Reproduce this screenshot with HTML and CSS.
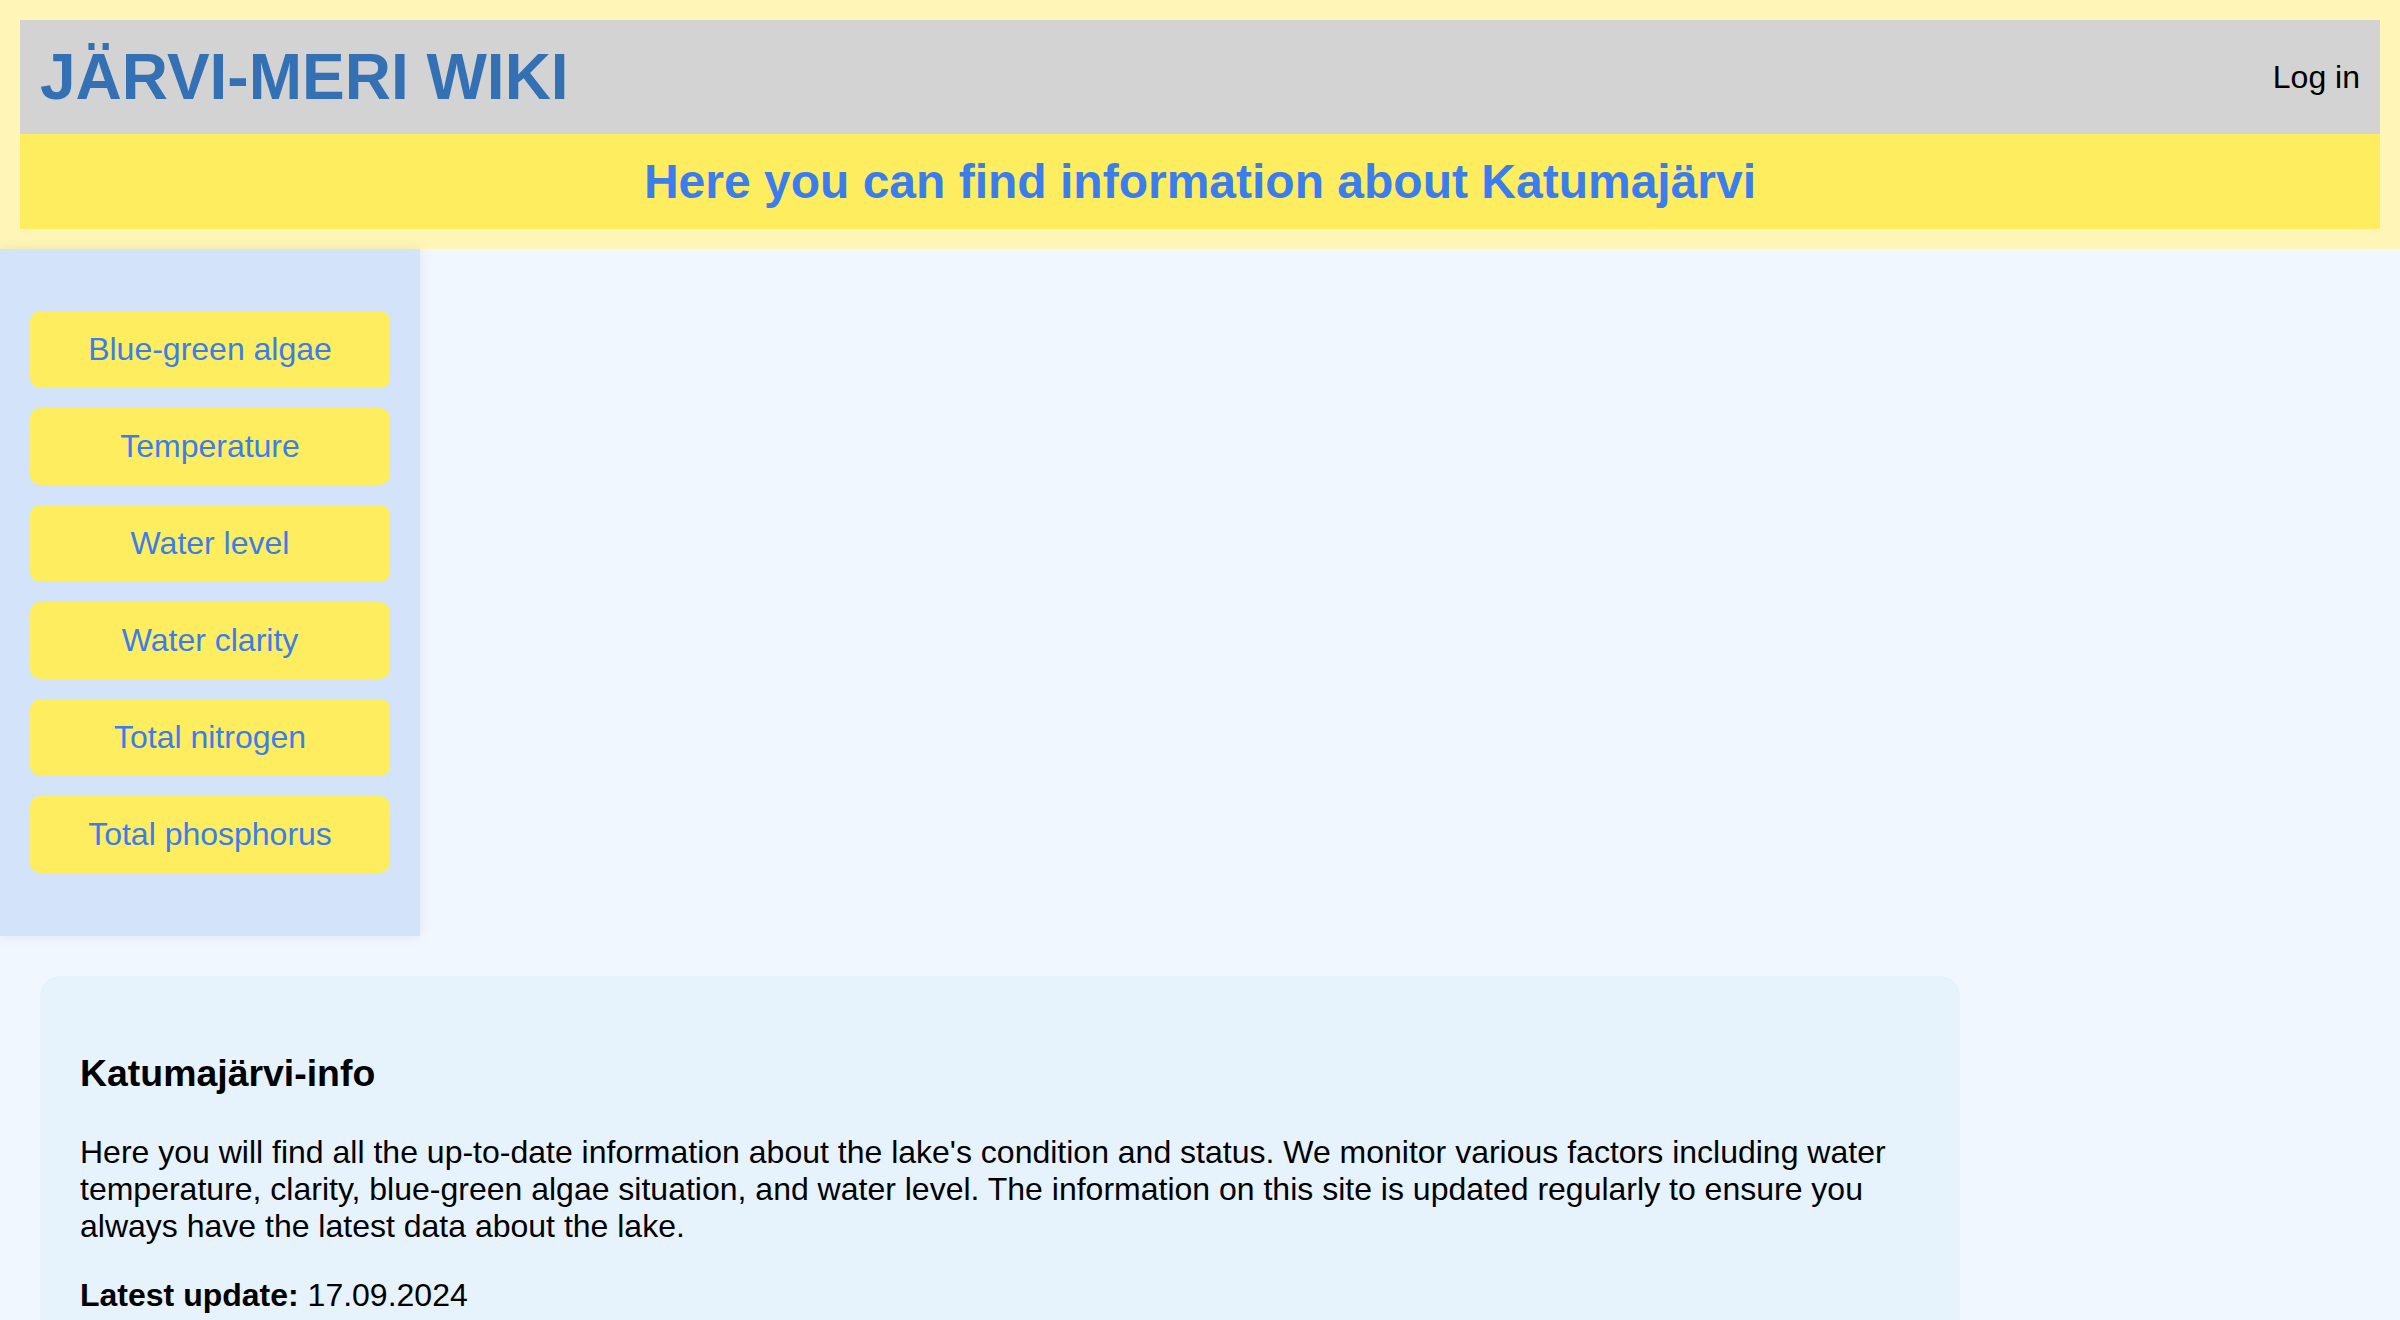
FILE: index.html
```html
<!DOCTYPE html>
<html lang="en">
<head>
<meta charset="utf-8">
<title>Järvi-Meri Wiki</title>
<link rel="stylesheet" href="styles.css">
</head>
<body>
<header class="site-header">
  <div class="topbar">
    <h1 class="logo">JÄRVI-MERI WIKI</h1>
    <a class="login" href="#">Log in</a>
  </div>
  <div class="banner">
    <h2 class="banner-title">Here you can find information about Katumajärvi</h2>
  </div>
</header>
<aside class="sidebar">
  <nav class="nav">
    <a class="nav-btn" href="#">Blue-green algae</a>
    <a class="nav-btn" href="#">Temperature</a>
    <a class="nav-btn" href="#">Water level</a>
    <a class="nav-btn" href="#">Water clarity</a>
    <a class="nav-btn" href="#">Total nitrogen</a>
    <a class="nav-btn" href="#">Total phosphorus</a>
  </nav>
</aside>
<main class="content">
  <section class="info-card">
    <h3 class="info-title">Katumajärvi-info</h3>
    <p class="info-text">Here you will find all the up-to-date information about the lake's condition and status. We monitor various factors including water temperature, clarity, blue-green algae situation, and water level. The information on this site is updated regularly to ensure you always have the latest data about the lake.</p>
    <p class="info-text"><strong>Latest update:</strong> 17.09.2024</p>
  </section>
</main>
</body>
</html>
```
FILE: styles.css
```css
html, body {
  margin: 0;
  padding: 0;
}
body {
  background: #f0f7ff;
  font-family: "Liberation Sans", Arial, Helvetica, sans-serif;
  font-size: 32px;
  color: #000;
}
.site-header {
  background: #fff5b6;
  padding: 20px;
}
.topbar {
  background: #d3d3d3;
  display: flex;
  justify-content: space-between;
  align-items: center;
  padding: 20px;
}
.logo {
  margin: 0;
  font-size: 64px;
  font-weight: bold;
  color: #3371b4;
  line-height: normal;
}
.login {
  color: #000;
  text-decoration: none;
  font-size: 32px;
}
.banner {
  background: #fded5f;
  padding: 20px;
  text-align: center;
}
.banner-title {
  margin: 0;
  font-size: 48px;
  font-weight: bold;
  color: #3b7ded;
  line-height: normal;
}
.sidebar {
  width: 420px;
  box-sizing: border-box;
  background: #d2e3fa;
  padding: 62px 30px 63px;
  box-shadow: 0 0 12px rgba(0, 0, 0, 0.08);
}
.nav {
  display: flex;
  flex-direction: column;
  gap: 20px;
}
.nav-btn {
  display: block;
  background: #fded5f;
  color: #3b7ded;
  text-decoration: none;
  text-align: center;
  padding: 20px;
  border-radius: 10px;
  font-size: 32px;
}
.content {
  padding: 40px;
}
.info-card {
  width: 1920px;
  box-sizing: border-box;
  background: #e6f2fc;
  border-radius: 20px;
  padding: 40px;
}
.info-title {
  font-size: 37.44px;
  margin: 36px 0 39px;
}
.info-text {
  margin: 32px 0;
}
```
